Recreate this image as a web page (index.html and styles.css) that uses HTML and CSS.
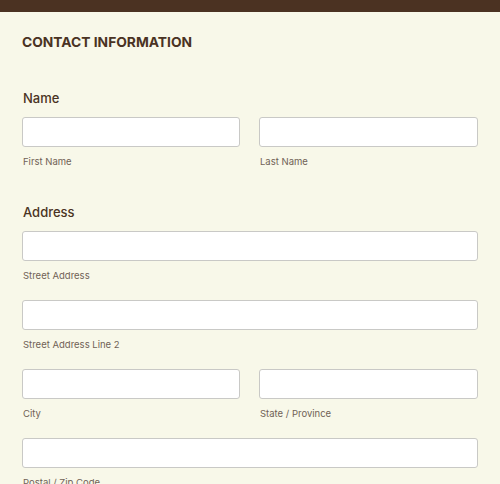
FILE: index.html
```html
<!DOCTYPE html>
<html>
<head>
<meta charset="utf-8">
<link rel="stylesheet" href="styles.css">
</head>
<body>
<div class="topbar"></div>
<main class="form">
  <h1 class="title">CONTACT INFORMATION</h1>

  <section class="field field-name">
    <div class="label">Name</div>
    <div class="row two">
      <div class="cell">
        <div class="input"></div>
        <div class="sub">First Name</div>
      </div>
      <div class="cell">
        <div class="input"></div>
        <div class="sub">Last Name</div>
      </div>
    </div>
  </section>

  <section class="field field-address">
    <div class="label">Address</div>
    <div class="row">
      <div class="cell">
        <div class="input"></div>
        <div class="sub">Street Address</div>
      </div>
    </div>
    <div class="row">
      <div class="cell">
        <div class="input"></div>
        <div class="sub">Street Address Line 2</div>
      </div>
    </div>
    <div class="row two">
      <div class="cell">
        <div class="input"></div>
        <div class="sub">City</div>
      </div>
      <div class="cell">
        <div class="input"></div>
        <div class="sub">State / Province</div>
      </div>
    </div>
    <div class="row">
      <div class="cell">
        <div class="input"></div>
        <div class="sub">Postal / Zip Code</div>
      </div>
    </div>
  </section>
</main>
</body>
</html>
```

FILE: styles.css
```css
html, body {
  margin: 0;
  padding: 0;
  background: #f8f8e9;
  font-family: Inter, "Noto Sans", sans-serif;
  color: #4a3323;
  overflow: hidden;
}
.topbar {
  height: 12px;
  background: #4b3222;
}
.form {
  padding: 20px 22px 0 22px;
}
.title {
  margin: 0;
  font-size: 13.8px;
  line-height: 20px;
  font-weight: 700;
  color: #4a3323;
}
.field {
  display: flex;
  flex-direction: column;
}
.field-name {
  margin-top: 37px;
}
.field-address {
  margin-top: 34px;
}
.label {
  font-size: 13px;
  line-height: 18px;
  font-weight: 500;
  color: #4a3323;
  padding-left: 1px;
  margin-bottom: 10px;
}
.row {
  display: grid;
  grid-template-columns: 1fr;
  gap: 19px;
  margin-bottom: 17px;
}
.row.two {
  grid-template-columns: 218px 1fr;
}
.field-name .row {
  margin-bottom: 0;
}
.input {
  height: 28px;
  background: #ffffff;
  border: 1px solid #c9c9c6;
  border-radius: 3px;
}
.sub {
  margin-top: 8px;
  font-size: 9.5px;
  line-height: 14px;
  color: #706256;
  padding-left: 1px;
}
```
